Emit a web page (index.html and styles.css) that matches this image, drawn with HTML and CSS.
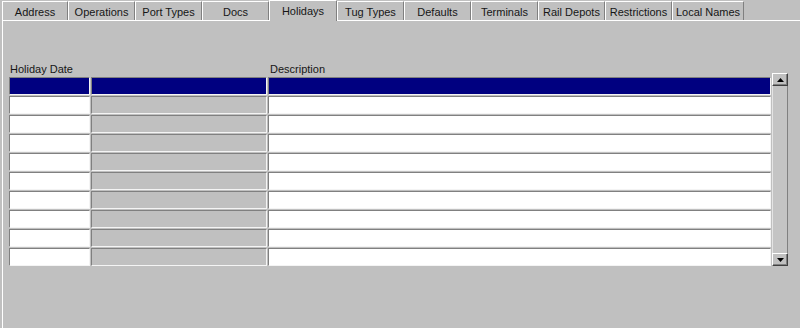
FILE: index.html
```html
<!DOCTYPE html>
<html>
<head>
<meta charset="utf-8">
<link rel="stylesheet" href="styles.css">
</head>
<body>
<div class="window">
  <div class="tabs">
    <div class="tab tab-first">Address</div>
    <div class="tab">Operations</div>
    <div class="tab">Port Types</div>
    <div class="tab">Docs</div>
    <div class="tab tab-active">Holidays</div>
    <div class="tab">Tug Types</div>
    <div class="tab">Defaults</div>
    <div class="tab">Terminals</div>
    <div class="tab">Rail Depots</div>
    <div class="tab">Restrictions</div>
    <div class="tab tab-wide">Local Names</div>
  </div>
  <div class="panel">
    <div class="table">
      <div class="grid">
        <div class="labels">
          <div class="label c1">Holiday Date</div>
          <div class="label c2"></div>
          <div class="label c3">Description</div>
        </div>
        <div class="row selected"><div class="cell c1"></div><div class="cell c2"></div><div class="cell c3"></div></div>
        <div class="row"><div class="cell c1"></div><div class="cell c2 ro"></div><div class="cell c3"></div></div>
        <div class="row"><div class="cell c1"></div><div class="cell c2 ro"></div><div class="cell c3"></div></div>
        <div class="row"><div class="cell c1"></div><div class="cell c2 ro"></div><div class="cell c3"></div></div>
        <div class="row"><div class="cell c1"></div><div class="cell c2 ro"></div><div class="cell c3"></div></div>
        <div class="row"><div class="cell c1"></div><div class="cell c2 ro"></div><div class="cell c3"></div></div>
        <div class="row"><div class="cell c1"></div><div class="cell c2 ro"></div><div class="cell c3"></div></div>
        <div class="row"><div class="cell c1"></div><div class="cell c2 ro"></div><div class="cell c3"></div></div>
        <div class="row"><div class="cell c1"></div><div class="cell c2 ro"></div><div class="cell c3"></div></div>
        <div class="row"><div class="cell c1"></div><div class="cell c2 ro"></div><div class="cell c3"></div></div>
      </div>
      <div class="scrollbar">
        <div class="sbtn"><svg width="7" height="4" viewBox="0 0 7 4"><polygon points="3.5,0 7,4 0,4" fill="#000"/></svg></div>
        <div class="track"></div>
        <div class="sbtn"><svg width="7" height="4" viewBox="0 0 7 4"><polygon points="0,0 7,0 3.5,4" fill="#000"/></svg></div>
      </div>
    </div>
  </div>
</div>
</body>
</html>
```

FILE: styles.css
```css
html, body {
  margin: 0;
  padding: 0;
  background: #c0c0c0;
  width: 800px;
  height: 328px;
  overflow: hidden;
  font-family: "Liberation Sans", Arial, sans-serif;
  font-size: 11px;
  color: #161616;
}

.window {
  display: flex;
  flex-direction: column;
  height: 328px;
}

.tabs {
  display: flex;
  align-items: flex-end;
  height: 20px;
  padding-left: 2px;
  position: relative;
  z-index: 2;
}

.tab {
  box-sizing: border-box;
  width: 67px;
  height: 19px;
  border-top: 1px solid #ffffff;
  border-left: 1px solid #ffffff;
  border-right: 1px solid #808080;
  text-align: center;
  line-height: 20px;
  background: #c0c0c0;
  overflow: hidden;
}

.tab-first {
  width: 66px;
}

.tab-wide {
  width: 72px;
}

.tab-active {
  width: 68px;
  height: 21px;
  margin-bottom: -1px;
  line-height: 20px;
}

.panel {
  flex: 1;
  margin-left: 2px;
  border-top: 1px solid #ffffff;
  border-left: 1px solid #ffffff;
  padding: 42px 0 0 6px;
  position: relative;
  z-index: 1;
}

.table {
  display: flex;
  align-items: flex-start;
}

.grid {
  display: flex;
  flex-direction: column;
}

.labels {
  display: flex;
  height: 13px;
  line-height: 13px;
  margin-bottom: 1px;
}

.label.c1 { padding-left: 1px; }
.label.c3 { padding-left: 2px; }

.row {
  display: flex;
  margin-bottom: 1px;
}

.c1 { width: 81px; box-sizing: border-box; margin-right: 1px; }
.c2 { width: 176px; box-sizing: border-box; margin-right: 1px; }
.c3 { width: 503px; box-sizing: border-box; }

.cell {
  height: 18px;
  background: #ffffff;
  border-top: 1px solid #808080;
  border-left: 1px solid #808080;
  border-bottom: 1px solid #f4f4f4;
  border-right: 1px solid #f4f4f4;
}

.cell.ro {
  background: #c0c0c0;
}

.row.selected .cell {
  background: #000080;
}

.scrollbar {
  display: flex;
  flex-direction: column;
  width: 16px;
  height: 193px;
  margin-top: 10px;
  margin-left: 1px;
}

.sbtn {
  box-sizing: border-box;
  height: 13px;
  width: 16px;
  background: #c0c0c0;
  border-top: 1px solid #ffffff;
  border-left: 1px solid #ffffff;
  border-right: 1px solid #404040;
  border-bottom: 1px solid #404040;
  box-shadow: inset -1px -1px 0 #808080;
  display: flex;
  align-items: center;
  justify-content: center;
}

.track {
  flex: 1;
  box-sizing: border-box;
  background: #c4c4c4;
  border-left: 1px solid #e4e4e4;
  border-right: 1px solid #808080;
}
```
